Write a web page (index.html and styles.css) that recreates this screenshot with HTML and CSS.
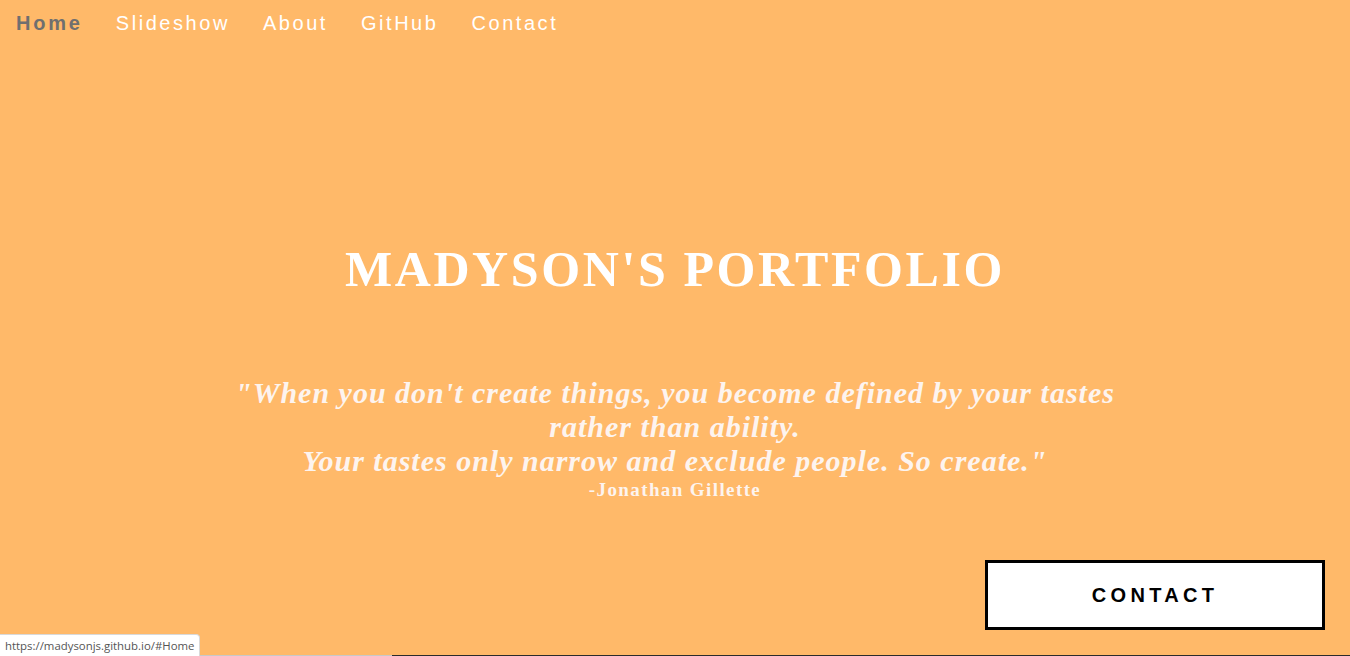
FILE: index.html
```html
<!DOCTYPE html>
<html lang="en">
<head>
<meta charset="utf-8">
<title>Madyson's Portfolio</title>
<link rel="stylesheet" href="styles.css">
</head>
<body>
<section class="hero" id="Home">
  <nav class="nav">
    <a class="nav-link active" href="#Home">Home</a>
    <a class="nav-link" href="#Slideshow">Slideshow</a>
    <a class="nav-link" href="#About">About</a>
    <a class="nav-link" href="#GitHub">GitHub</a>
    <a class="nav-link" href="#Contact">Contact</a>
  </nav>
  <h1 class="title">MADYSON'S PORTFOLIO</h1>
  <blockquote class="quote">
    <p class="quote-text">"When you don't create things, you become defined by your tastes<br>rather than ability.<br>Your tastes only narrow and exclude people. So create."</p>
    <p class="quote-author">-Jonathan Gillette</p>
  </blockquote>
  <a class="contact-btn" href="#Contact">CONTACT</a>
</section>
<div class="next-edge"><span class="edge-a"></span><span class="edge-b"></span><span class="edge-c"></span></div>
<div class="status">https://madysonjs.github.io/#Home</div>
</body>
</html>
```
FILE: styles.css
```css
html, body {
  margin: 0;
  padding: 0;
  overflow: hidden;
}
body {
  background: #ffb969;
  font-family: "Liberation Sans", Arial, sans-serif;
}
.hero {
  height: 655px;
  display: flex;
  flex-direction: column;
  align-items: center;
  box-sizing: border-box;
}
.nav {
  align-self: stretch;
  display: flex;
  gap: 33px;
  padding: 13px 0 0 16px;
  height: 33px;
  box-sizing: border-box;
}
.nav-link {
  font-size: 20px;
  line-height: 20px;
  letter-spacing: 2.55px;
  color: #ffffff;
  text-decoration: none;
}
.nav-link.active {
  color: #6f6f6f;
  font-weight: bold;
  letter-spacing: 2.8px;
}
.title {
  margin: 211px 0 0 0;
  font-family: "Liberation Serif", "Times New Roman", serif;
  font-weight: bold;
  font-size: 50px;
  line-height: 50px;
  letter-spacing: 2.6px;
  color: #ffffff;
}
.quote {
  margin: 82px 0 0 0;
  text-align: center;
  font-family: "Liberation Serif", "Times New Roman", serif;
  color: #fdf4ef;
}
.quote-text {
  margin: 0;
  font-size: 30px;
  line-height: 34px;
  font-style: italic;
  font-weight: bold;
  letter-spacing: 1px;
}
.quote-author {
  margin: 1px 0 0 0;
  font-size: 19px;
  line-height: 22px;
  font-weight: bold;
  letter-spacing: 1.4px;
}
.contact-btn {
  margin-top: auto;
  margin-bottom: 25px;
  align-self: flex-end;
  margin-right: 25px;
  width: 340px;
  height: 70px;
  box-sizing: border-box;
  border: 3px solid #000000;
  background: #ffffff;
  color: #000000;
  text-decoration: none;
  font-weight: bold;
  font-size: 20px;
  letter-spacing: 4.3px;
  display: flex;
  align-items: center;
  justify-content: center;
  padding-left: 0;
}
.next-edge {
  display: flex;
  height: 1px;
}
.edge-a { width: 47px; background: #2b2b2b; }
.edge-b { width: 345px; background: #c8c8c8; }
.edge-c { flex: 1; background: #2b2b2b; }
.status {
  position: fixed;
  left: 0;
  bottom: 0;
  height: 22px;
  padding: 0 5px 0 5px;
  box-sizing: border-box;
  background: #ffffff;
  border: 1px solid #d9d9d9;
  border-left: none;
  border-bottom: none;
  border-top-right-radius: 4px;
  font-family: "Open Sans", "Noto Sans", sans-serif;
  font-size: 11.4px;
  line-height: 21px;
  color: #555555;
}
```
